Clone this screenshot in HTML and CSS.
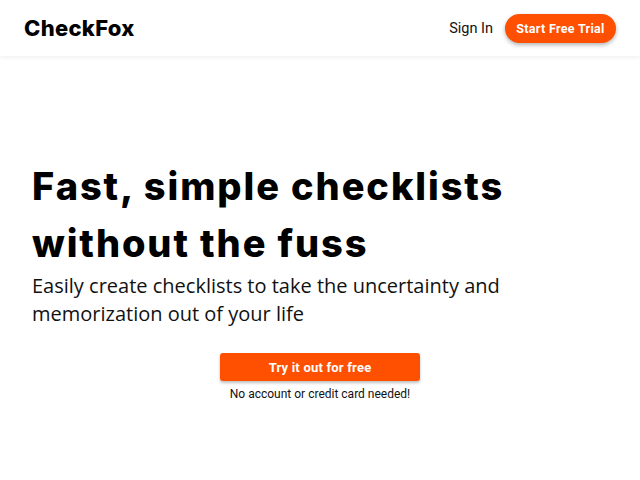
FILE: index.html
```html
<!DOCTYPE html>
<html>
<head>
<meta charset="utf-8">
<link rel="stylesheet" href="styles.css">
</head>
<body>
<header class="topbar">
  <div class="logo">CheckFox</div>
  <nav class="nav">
    <a class="signin" href="#">Sign In</a>
    <a class="trial" href="#">Start Free Trial</a>
  </nav>
</header>
<main class="hero">
  <h1 class="title">Fast, simple checklists<br>without the fuss</h1>
  <p class="lead">Easily create checklists to take the uncertainty and<br>memorization out of your life</p>
  <div class="cta">
    <a class="try" href="#">Try it out for free</a>
    <span class="note">No account or credit card needed!</span>
  </div>
</main>
</body>
</html>
```
FILE: styles.css
```css
* { box-sizing: border-box; }
html, body { margin: 0; padding: 0; background: #fff; }
body { font-family: "Roboto", "Liberation Sans", sans-serif; color: #111; }
a { text-decoration: none; }

.topbar {
  height: 56px;
  display: flex;
  align-items: center;
  justify-content: space-between;
  padding: 0 24px 0 24px;
  box-shadow: 0 1px 5px rgba(0,0,0,0.08);
  position: relative;
}
.logo {
  font-family: "Inter", sans-serif;
  font-weight: 800;
  font-size: 22px;
  letter-spacing: 0.3px;
  color: #000;
}
.nav { display: flex; align-items: center; gap: 12px; }
.signin { color: #111; font-size: 14.5px; font-family: "Roboto", sans-serif; }
.trial {
  background: #ff4f00;
  color: #fff;
  font-weight: 700;
  font-size: 12.5px;
  height: 29px;
  width: 111px;
  border-radius: 15px;
  display: flex;
  align-items: center;
  justify-content: center;
  box-shadow: 0 2px 4px rgba(0,0,0,0.3);
  letter-spacing: 0.3px;
}

.hero { padding: 102px 32px 0 32px; }
.title {
  margin: 0;
  font-family: "Inter", sans-serif;
  font-weight: 800;
  font-size: 38px;
  letter-spacing: 1.9px;
  line-height: 57px;
  color: #000;
}
.lead {
  margin: 0;
  font-family: "Open Sans", sans-serif;
  font-size: 20px;
  line-height: 28px;
  color: #111;
}
.cta {
  margin-top: 25px;
  display: flex;
  flex-direction: column;
  align-items: center;
  gap: 6px;
}
.try {
  width: 200px;
  height: 28px;
  background: #ff4f00;
  color: #fff;
  border-radius: 3px;
  display: flex;
  align-items: center;
  justify-content: center;
  font-weight: 700;
  font-size: 13px;
  letter-spacing: 0.2px;
  box-shadow: 0 2px 3px rgba(0,0,0,0.25);
}
.note { font-size: 12px; color: #111; }
```
